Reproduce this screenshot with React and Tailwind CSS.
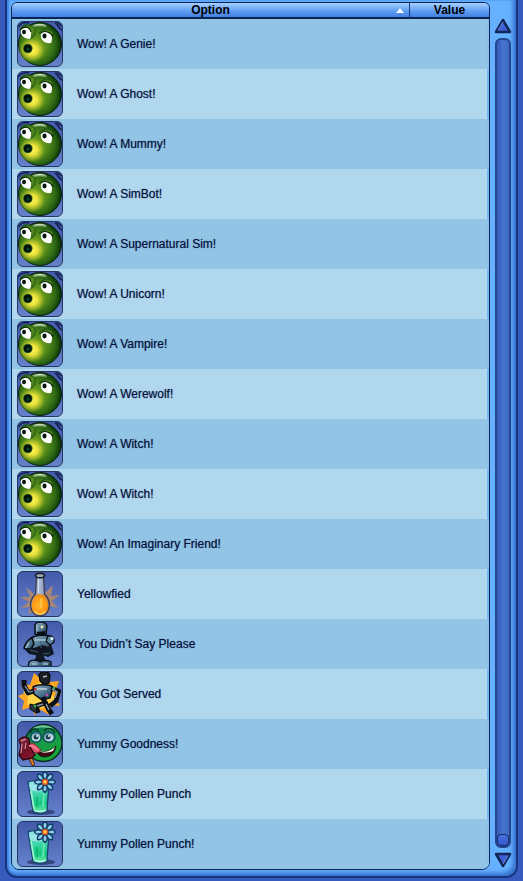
import { useState } from "react";

const options = [
  { label: "Wow! A Genie!", icon: "wow" },
  { label: "Wow! A Ghost!", icon: "wow" },
  { label: "Wow! A Mummy!", icon: "wow" },
  { label: "Wow! A SimBot!", icon: "wow" },
  { label: "Wow! A Supernatural Sim!", icon: "wow" },
  { label: "Wow! A Unicorn!", icon: "wow" },
  { label: "Wow! A Vampire!", icon: "wow" },
  { label: "Wow! A Werewolf!", icon: "wow" },
  { label: "Wow! A Witch!", icon: "wow" },
  { label: "Wow! A Witch!", icon: "wow" },
  { label: "Wow! An Imaginary Friend!", icon: "wow" },
  { label: "Yellowfied", icon: "flask" },
  { label: "You Didn’t Say Please", icon: "robot" },
  { label: "You Got Served", icon: "dancer" },
  { label: "Yummy Goodness!", icon: "yummy" },
  { label: "Yummy Pollen Punch", icon: "punch" },
  { label: "Yummy Pollen Punch!", icon: "punch" },
];

// Gradients shared by all the moodlet icons
const IconDefs = () => (
  <svg width="0" height="0" className="absolute" aria-hidden="true">
    <defs>
      <linearGradient id="tile" x1="0" y1="0" x2="0" y2="1">
        <stop offset="0" stopColor="#4359a9" />
        <stop offset="1" stopColor="#6682cb" />
      </linearGradient>
      <radialGradient id="wowBall" cx="0.42" cy="0.52" r="0.58">
        <stop offset="0" stopColor="#7ba61f" />
        <stop offset="0.5" stopColor="#4d861a" />
        <stop offset="0.78" stopColor="#2a6312" />
        <stop offset="1" stopColor="#07300a" />
      </radialGradient>
      <radialGradient id="wowGlow">
        <stop offset="0" stopColor="#fff65a" />
        <stop offset="0.4" stopColor="#f0e53c" stopOpacity="0.95" />
        <stop offset="0.7" stopColor="#bcc62c" stopOpacity="0.65" />
        <stop offset="1" stopColor="#7ba61f" stopOpacity="0" />
      </radialGradient>
      <linearGradient id="lid" x1="0" y1="0" x2="1" y2="1">
        <stop offset="0" stopColor="#1f5a12" />
        <stop offset="0.6" stopColor="#5c8f22" />
        <stop offset="1" stopColor="#2c6213" />
      </linearGradient>
      <linearGradient id="shine" x1="0" y1="0" x2="0" y2="1">
        <stop offset="0" stopColor="#fff" stopOpacity="0.95" />
        <stop offset="1" stopColor="#b9d78b" stopOpacity="0.1" />
      </linearGradient>
      <linearGradient id="glass" x1="0" y1="0" x2="1" y2="0">
        <stop offset="0" stopColor="#7d90b4" />
        <stop offset="0.5" stopColor="#a9b8d3" />
        <stop offset="1" stopColor="#5d719f" />
      </linearGradient>
      <radialGradient id="juice" cx="0.45" cy="0.55" r="0.6">
        <stop offset="0" stopColor="#ffb52c" />
        <stop offset="0.7" stopColor="#fd9a12" />
        <stop offset="1" stopColor="#e07d10" />
      </radialGradient>
      <linearGradient id="metal" x1="0" y1="0" x2="1" y2="1">
        <stop offset="0" stopColor="#8fb3c9" />
        <stop offset="0.5" stopColor="#4f7590" />
        <stop offset="1" stopColor="#182a38" />
      </linearGradient>
      <linearGradient id="greenBall" x1="0.1" y1="0" x2="0.5" y2="1">
        <stop offset="0" stopColor="#0c6a42" />
        <stop offset="0.5" stopColor="#159a4b" />
        <stop offset="1" stopColor="#1aa535" />
      </linearGradient>
      <linearGradient id="popsicle" x1="0" y1="0" x2="1" y2="1">
        <stop offset="0" stopColor="#a5465b" />
        <stop offset="0.4" stopColor="#6d1228" />
        <stop offset="1" stopColor="#8f1531" />
      </linearGradient>
      <linearGradient id="drink" x1="0" y1="0" x2="0" y2="1">
        <stop offset="0" stopColor="#a5e6f2" />
        <stop offset="0.25" stopColor="#58dcc5" />
        <stop offset="0.7" stopColor="#13c77d" />
        <stop offset="1" stopColor="#7af0b4" />
      </linearGradient>
      <clipPath id="tileClip">
        <rect x="1" y="1" width="44" height="44" rx="5" />
      </clipPath>
    </defs>
  </svg>
);

const WowFace = () => (
  <>
    <path d="M1 6C4 2 8 1 12 2M38 2c3 1 3 5 7 7M40 1c2 2 3 3 5 4" stroke="#101d50" strokeWidth="1.5" fill="none" />
    <circle cx="23" cy="23" r="21.5" fill="url(#wowBall)" stroke="#061f08" strokeWidth="1" />
    <ellipse cx="15" cy="29" rx="14" ry="13" fill="url(#wowGlow)" />
    <path d="M15 5c4-3 12-3 15 0l-1 2c-4-2-9-2-13 0z" fill="url(#shine)" />
    <path d="M3 9c1-7 13-7 15 0 1 5-2 8-6 9z" fill="url(#lid)" stroke="#1a4d10" strokeWidth="0.8" />
    <path d="M4 9c4-4 9-2 10 2 0 3 0 5-1 7-6 0-10-4-9-9z" fill="#fff" />
    <path d="M3 9c4-5 10-3 11 2" stroke="#0b2c0a" strokeWidth="1.1" fill="none" />
    <ellipse cx="7" cy="11" rx="2" ry="2.3" fill="#07150b" />
    <path d="M22 13c2-7 14-6 15 2-4-4-9-5-15-2z" fill="url(#lid)" stroke="#1a4d10" strokeWidth="0.6" />
    <path d="M24 13c3-4 10-2 11 3 0 2 0 4-1 6-6 1-11-3-10-9z" fill="#fff" />
    <path d="M24 12c3-3 10-1 12 4" stroke="#0b2c0a" strokeWidth="1.1" fill="none" />
    <ellipse cx="27.5" cy="15" rx="2.1" ry="2.4" fill="#07150b" />
    <circle cx="10.8" cy="27.5" r="4.8" fill="#3a7424" />
    <circle cx="10.8" cy="27.5" r="4" fill="#03140f" />
    <circle cx="11" cy="28" r="1.6" fill="#0c4438" />
  </>
);

const Flask = () => (
  <>
    <path d="M23 15l4 8 9-9-2 11 9-1-8 6 6 7-9-2 1 7-6-2-4 4-4-4-8 3 2-7-9 1 8-6-9-5 10 0-4-10 9 8z" fill="#a58676" />
    <path d="M19.500 5h7l1 18c6 6 6 13 3 18-3 5-12 5-15 0-3-5-3-12 3-18z" fill="url(#glass)" stroke="#3d3a48" strokeWidth="1.200" />
    <path d="M19 24c3-1 5-1 8 0 5 6 5 12 3 16-3 5-11 5-14 0-2-4-2-10 3-16z" fill="url(#juice)" />
    <path d="M18 40c2 4 8 4 10 0" stroke="#ffd567" strokeWidth="1.200" fill="none" />
    <path d="M24 27v10" stroke="#ffc44c" strokeWidth="1.600" />
    <ellipse cx="23" cy="4.500" rx="4.500" ry="2.300" fill="#9aa1af" stroke="#171b2b" strokeWidth="1.500" />
    <path d="M21.500 8v14" stroke="#dce5f5" strokeWidth="1" />
  </>
);

const Robot = () => (
  <>
    <path d="M18 4c1-4 11-4 12 1l-1 9-5 2-6-3z" fill="url(#metal)" stroke="#0a0e18" strokeWidth="1.500" />
    <path d="M20 11l8-1v4l-4 2-4-2z" fill="#0b0f18" />
    <circle cx="25" cy="6" r="1.400" fill="#ffe8bc" />
    <path d="M14 17c5-3 17-4 21-1l-3 12-6 5-8-3-5-6z" fill="url(#metal)" stroke="#080d16" strokeWidth="1.500" />
    <path d="M15 17c-4 1-7 6-8 10l5 4 5-8z" fill="url(#metal)" stroke="#070b14" strokeWidth="1.500" />
    <path d="M31 15c4-1 7 2 6 6l-4 3-4-4z" fill="#5f88a1" stroke="#070b14" strokeWidth="1.300" />
    <circle cx="35" cy="17.500" r="1.600" fill="#e4faff" />
    <path d="M7 27l10 0 8-3 10 3-2 6-9 2-12-2z" fill="#0f1622" />
    <path d="M34 23l3 10-6 3-9-3 7-3z" fill="#101a27" />
    <path d="M18 31h10l-1 5 2 4H17l2-4z" fill="#111925" />
    <path d="M12 41c3-3 8-2 11 0 3-2 9-2 11 0v5H11z" fill="url(#metal)" stroke="#080b12" strokeWidth="1.300" />
    <path d="M18 19h11M12 22l-3 5M20 4v6M15 43h5M26 43h5" stroke="#a3bfd1" strokeWidth="1.300" />
    <path d="M24 20v7M13 29l8 2M26 33l7-1" stroke="#3c5a70" strokeWidth="1" />
  </>
);

const Dancer = () => (
  <>
    <path d="M17 2l7 6 7-6 2 9 9-1-3 8 5 5-6 4 5 8-9-1-2 10-8-5-6 5-4-8-9 3 2-9-6-5 7-3-4-9 9 1z" fill="#fda724" />
    <path d="M24 10l4 5 9-1-2 9 4 7-9 2-5 6-6-5-9 1 1-8-5-5 9-3z" fill="#fed44b" />
    <path d="M22 4c2-5 11-4 11 1l-1 7-5 2-4-4z" fill="#1b1e25" stroke="#05070b" strokeWidth="1.200" />
    <path d="M19 19l-8 3-4-8V9" stroke="#0a0e15" strokeWidth="5" strokeLinejoin="round" fill="none" />
    <path d="M17 20l-5 1-4-6" stroke="#75899a" strokeWidth="1.500" fill="none" />
    <path d="M16 16c5-3 16-3 20 0l-3 11-8 2-8-6z" fill="url(#metal)" stroke="#080b12" strokeWidth="1.500" />
    <path d="M34 17l8 3-3 10-6 5" stroke="#0b1017" strokeWidth="4.500" strokeLinejoin="round" fill="none" />
    <path d="M26 26l2 6-9 3 2 7M28 31l4 8 3 4" stroke="#0b1017" strokeWidth="5" strokeLinejoin="round" fill="none" />
    <path d="M35 18l5 3-2 6M26 33l-6 2M29 33l3 6" stroke="#8597a3" strokeWidth="1.500" fill="none" />
    <path d="M13 33l7 2-1 7-6-4z" fill="#26333a" stroke="#070b10" />
    <path d="M26 6l4-1" stroke="#b4b7bb" strokeWidth="1.500" />
    <path d="M20 18h10" stroke="#c2d4dd" strokeWidth="1.600" />
    <circle cx="18" cy="18" r="1.300" fill="#e0202e" />
    <circle cx="30" cy="24" r="1.200" fill="#cf47be" />
    <circle cx="18" cy="35" r="1.500" fill="#27a54d" />
    <circle cx="37" cy="17" r="1.200" fill="#33bb60" />
  </>
);

const Yummy = () => (
  <>
    <circle cx="26.500" cy="22" r="18.500" fill="url(#greenBall)" stroke="#06301d" strokeWidth="1.500" />
    <path d="M15 8c6-5 16-5 22 0-6-2-16-2-22 0z" fill="#a0e8bb" opacity="0.7" />
    <path d="M13 12c2-5 7-5 9-1M27 10c3-4 9-3 11 2" stroke="#053d2b" strokeWidth="1.500" fill="none" />
    <ellipse cx="19" cy="16" rx="5.500" ry="5.500" fill="#2a7c88" stroke="#0c4a4b" strokeWidth="1.200" />
    <ellipse cx="32" cy="16" rx="6" ry="5.500" fill="#2a7c88" stroke="#0c4a4b" strokeWidth="1.200" />
    <ellipse cx="19" cy="16.500" rx="4.200" ry="3.800" fill="#bed6de" />
    <ellipse cx="32" cy="16.500" rx="4.600" ry="3.800" fill="#bed6de" />
    <circle cx="19" cy="16" r="2.500" fill="#1b4258" />
    <circle cx="31" cy="16" r="2.500" fill="#1b4258" />
    <circle cx="20" cy="15" r="0.900" fill="#fff" />
    <circle cx="32" cy="15" r="0.900" fill="#fff" />
    <path d="M18 29c8 4 15 1 21-4-1 8-6 11-12 11-4 0-7-3-9-7z" fill="#3b0711" stroke="#07331b" strokeWidth="1" />
    <path d="M22 30c6 2 11 0 16-4l-2 4c-5 2-9 2-12 1z" fill="#f2eee9" />
    <path d="M11 23c6-3 9 3 13 6-3 5-9 3-12-1z" fill="#e1546c" stroke="#8f1430" strokeWidth="0.800" />
    <path d="M13 36l3 7" stroke="#3d2117" strokeWidth="4" strokeLinecap="round" />
    <path d="M13 36l3 7" stroke="#d77727" strokeWidth="2.400" strokeLinecap="round" />
    <path d="M2 19c2-3 7-4 10-1l1 8 5 8-3 3-9 2-4-5 2-9z" fill="url(#popsicle)" stroke="#2e0611" strokeWidth="1.300" />
    <path d="M4 20l5-2M5 23l-1 9M9 22l-1 6" stroke="#d794a2" strokeWidth="1.200" />
    <path d="M12 25c3-1 6 1 9 4" stroke="#f27f93" strokeWidth="2" fill="none" />
  </>
);

const petals = [0, 45, 90, 135, 180, 225, 270, 315];

const Punch = () => (
  <>
    <ellipse cx="24" cy="41" rx="14" ry="3" fill="#35477f" />
    <path d="M11 11c4-2 16-2 21 0l-2 29c-3 3-12 3-14 0z" fill="url(#drink)" stroke="#164a73" strokeWidth="1.400" />
    <path d="M12 13c4 2 15 1 19 0l-1 5c-4 3-13 3-17 1z" fill="#b5eaf4" opacity="0.7" />
    <path d="M14 20l3 18" stroke="#a1f5d4" strokeWidth="1.600" />
    <path d="M27 22l-1 14" stroke="#5fe5ae" strokeWidth="2" />
    <path d="M20 26v10" stroke="#10b873" strokeWidth="2" />
    <path d="M17 39c3 2 9 2 12 0" stroke="#bdfce6" strokeWidth="1.500" fill="none" />
    <g transform="translate(28 11)">
      {petals.map((angle) => (
        <path
          key={angle}
          d="M0-2C-3-5-3-9 0-10.500 3-9 3-5 0-2z"
          transform={`rotate(${angle})`}
          fill="#8ccbea"
          stroke="#113c67"
          strokeWidth="1.500"
        />
      ))}
      <circle r="3" fill="#ee6c2c" stroke="#ad4519" strokeWidth="0.600" />
      <circle r="1.400" fill="#ffdc4e" />
    </g>
  </>
);

const icons = {
  wow: WowFace,
  flask: Flask,
  robot: Robot,
  dancer: Dancer,
  yummy: Yummy,
  punch: Punch,
};

const MoodIcon = ({ name }) => {
  const Drawing = icons[name];
  return (
    <svg viewBox="0 0 46 46" className="size-[46px] shrink-0" aria-hidden="true">
      <rect x="0.5" y="0.5" width="45" height="45" rx="5.5" fill="url(#tile)" stroke="#263565" />
      <g clipPath="url(#tileClip)">
        <Drawing />
      </g>
    </svg>
  );
};

const ScrollArrow = ({ label, down }) => (
  <button type="button" aria-label={label} className="block h-4 w-[18px] cursor-pointer">
    <svg viewBox="0 0 18 16" className={down ? "h-4 w-[18px] rotate-180" : "h-4 w-[18px]"}>
      <path d="M9 2L16 14H2z" fill="#3f61d5" stroke="#122657" strokeWidth="2.500" strokeLinejoin="round" />
      <path d="M9 4L4 12.500" stroke="#7193ee" strokeWidth="1" />
    </svg>
  </button>
);

const OptionTable = ({ rows, ascending, onSort }) => (
  <div className="min-w-0 flex-1 overflow-hidden rounded-t-md rounded-b-lg border border-[#0b2456] bg-[#69b4f8]">
    <table className="w-full table-fixed border-separate border-spacing-0">
      <thead>
        <tr className="h-4 bg-linear-to-b from-[#a6d0ff] via-[#5f9cf2] to-[#3975dc] text-xs leading-3 text-black">
          <th scope="col" className="border-b-2 border-[#0b2456] p-0 font-bold">
            <button
              type="button"
              onClick={onSort}
              className="grid w-full cursor-pointer grid-cols-[14px_1fr_14px] items-center leading-3"
            >
              <span className="col-start-2">Option</span>
              <svg viewBox="0 0 10 6" className={ascending ? "h-[5px] w-2.5" : "h-[5px] w-2.5 rotate-180"}>
                <path d="M5 0L10 6H0z" fill="#f3f8ff" />
              </svg>
            </button>
          </th>
          <th scope="col" className="w-20 border-b-2 border-l border-b-[#0b2456] border-l-[#173a7e] p-0 font-bold">
            Value
          </th>
        </tr>
      </thead>
      <tbody>
        {rows.map((row, i) => (
          <tr key={i} className="group h-[50px] odd:bg-[#91c4e5] even:bg-[#b0d7ee]">
            <td className="p-0 pl-[5px]">
              <div className="flex items-center gap-3.5">
                <MoodIcon name={row.icon} />
                <span className="text-xs text-[#06103c] [text-shadow:0_0_1px_#06103c80]">{row.label}</span>
              </div>
            </td>
            <td className="border-r-2 border-[#8bc1e8] p-0 group-even:border-[#74b8f2]"></td>
          </tr>
        ))}
      </tbody>
    </table>
  </div>
);

const ScrollBar = () => (
  <div className="flex w-[18px] shrink-0 flex-col items-center pt-4 pb-0.5">
    <ScrollArrow label="Scroll up" />
    <div className="mt-1 flex w-4 flex-1 flex-col justify-end rounded-md border-2 border-[#24468f] bg-linear-to-r from-[#365bb5] via-[#4773d0] to-[#3f68c5]">
      <div className="h-3 rounded-sm border border-[#142b68] bg-linear-to-b from-[#4a70e0] to-[#3557cd]"></div>
    </div>
    <div className="mt-1">
      <ScrollArrow label="Scroll down" down />
    </div>
  </div>
);

const App = () => {
  const [ascending, setAscending] = useState(true);
  const rows = ascending ? options : [...options].reverse();

  return (
    <div className="min-h-screen bg-[#365bbd] px-[5px] pb-1 font-['Liberation_Sans',Arial,sans-serif]">
      <IconDefs />
      <main className="flex gap-1 rounded-b-xl border-x-2 border-b-2 border-[#17357f] bg-[#66b1ff] px-1 pt-0.5 pb-1.5 shadow-[inset_-3px_-3px_4px_#3570cc,inset_2px_0_2px_#4384df]">
        <OptionTable rows={rows} ascending={ascending} onSort={() => setAscending(!ascending)} />
        <ScrollBar />
      </main>
    </div>
  );
};

export default App;
